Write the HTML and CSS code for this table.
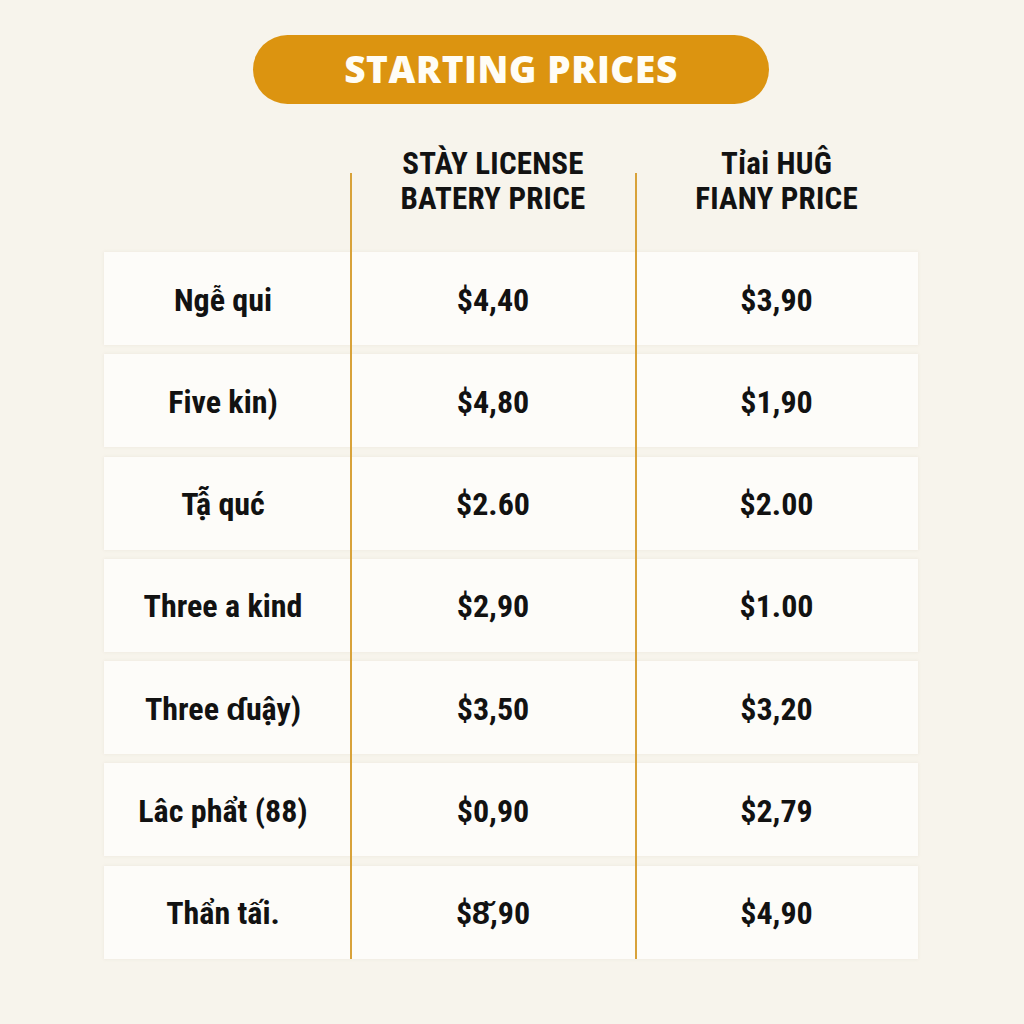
FILE: index.html
```html
<!DOCTYPE html>
<html lang="vi">
<head>
<meta charset="utf-8">
<title>Starting Prices</title>
<link rel="stylesheet" href="styles.css">
</head>
<body>
<main class="page">
  <h1 class="pill">STARTING PRICES</h1>
  <section class="table">
    <div class="vline vline-1"></div>
    <div class="vline vline-2"></div>
    <div class="head">
      <div></div>
      <div class="hcell">STÀY LICENSE<br>BATERY PRICE</div>
      <div class="hcell">Tỉai HUĜ<br>FIANY PRICE</div>
    </div>
    <div class="rows">
      <div class="row"><div>Ngễ qui</div><div>$4,40</div><div>$3,90</div></div>
      <div class="row"><div>Five kin)</div><div>$4,80</div><div>$1,90</div></div>
      <div class="row"><div>Tậ̃ quć</div><div>$2.60</div><div>$2.00</div></div>
      <div class="row"><div>Three a kind</div><div>$2,90</div><div>$1.00</div></div>
      <div class="row"><div>Three ɗuậy)</div><div>$3,50</div><div>$3,20</div></div>
      <div class="row"><div>Lâc phẩt (88)</div><div>$0,90</div><div>$2,79</div></div>
      <div class="row"><div>Thẩn tấi.</div><div>$8̆,90</div><div>$4,90</div></div>
    </div>
  </section>
</main>
</body>
</html>
```
FILE: styles.css
```css
html, body {
  margin: 0;
  padding: 0;
}
body {
  background: #f7f4ec;
  width: 1024px;
  height: 1024px;
  overflow: hidden;
}
.page {
  display: flex;
  flex-direction: column;
  align-items: center;
  padding-top: 35px;
}
.pill {
  margin: 0 0 0 -2px;
  width: 516px;
  height: 69px;
  border-radius: 35px;
  background: #dc9410;
  color: #fffdf6;
  font-family: "Open Sans", sans-serif;
  font-weight: 800;
  font-size: 37px;
  letter-spacing: 0.6px;
  display: flex;
  align-items: center;
  justify-content: center;
  line-height: 1;
  padding-bottom: 2px;
  box-sizing: border-box;
}
.table {
  position: relative;
  width: 814px;
  margin-left: -3px;
  margin-top: 40px;
  font-family: Roboto, sans-serif;
  font-stretch: 80%;
  font-weight: 700;
  color: #121212;
}
.vline {
  position: absolute;
  top: 29px;
  bottom: 0;
  width: 2px;
  background: #d8a23a;
  z-index: 2;
}
.vline-1 { left: 246px; }
.vline-2 { left: 531px; }
.head, .row {
  display: grid;
  grid-template-columns: 247px 285px 282px;
}
.head {
  height: 108px;
  align-items: start;
}
.hcell {
  text-align: center;
  font-size: 31px;
  font-stretch: 75%;
  line-height: 35px;
  letter-spacing: 0.2px;
  padding-top: 2px;
}
.rows {
  display: flex;
  flex-direction: column;
  gap: 9.3px;
}
.row {
  height: 93px;
  background: #fdfcf9;
  box-shadow: 0 0 3px rgba(230, 224, 210, 0.6);
  font-size: 32px;
  align-items: center;
}
.row > div {
  text-align: center;
  padding-top: 2px;
}
.row > div:first-child {
  padding-right: 8px;
}
```
